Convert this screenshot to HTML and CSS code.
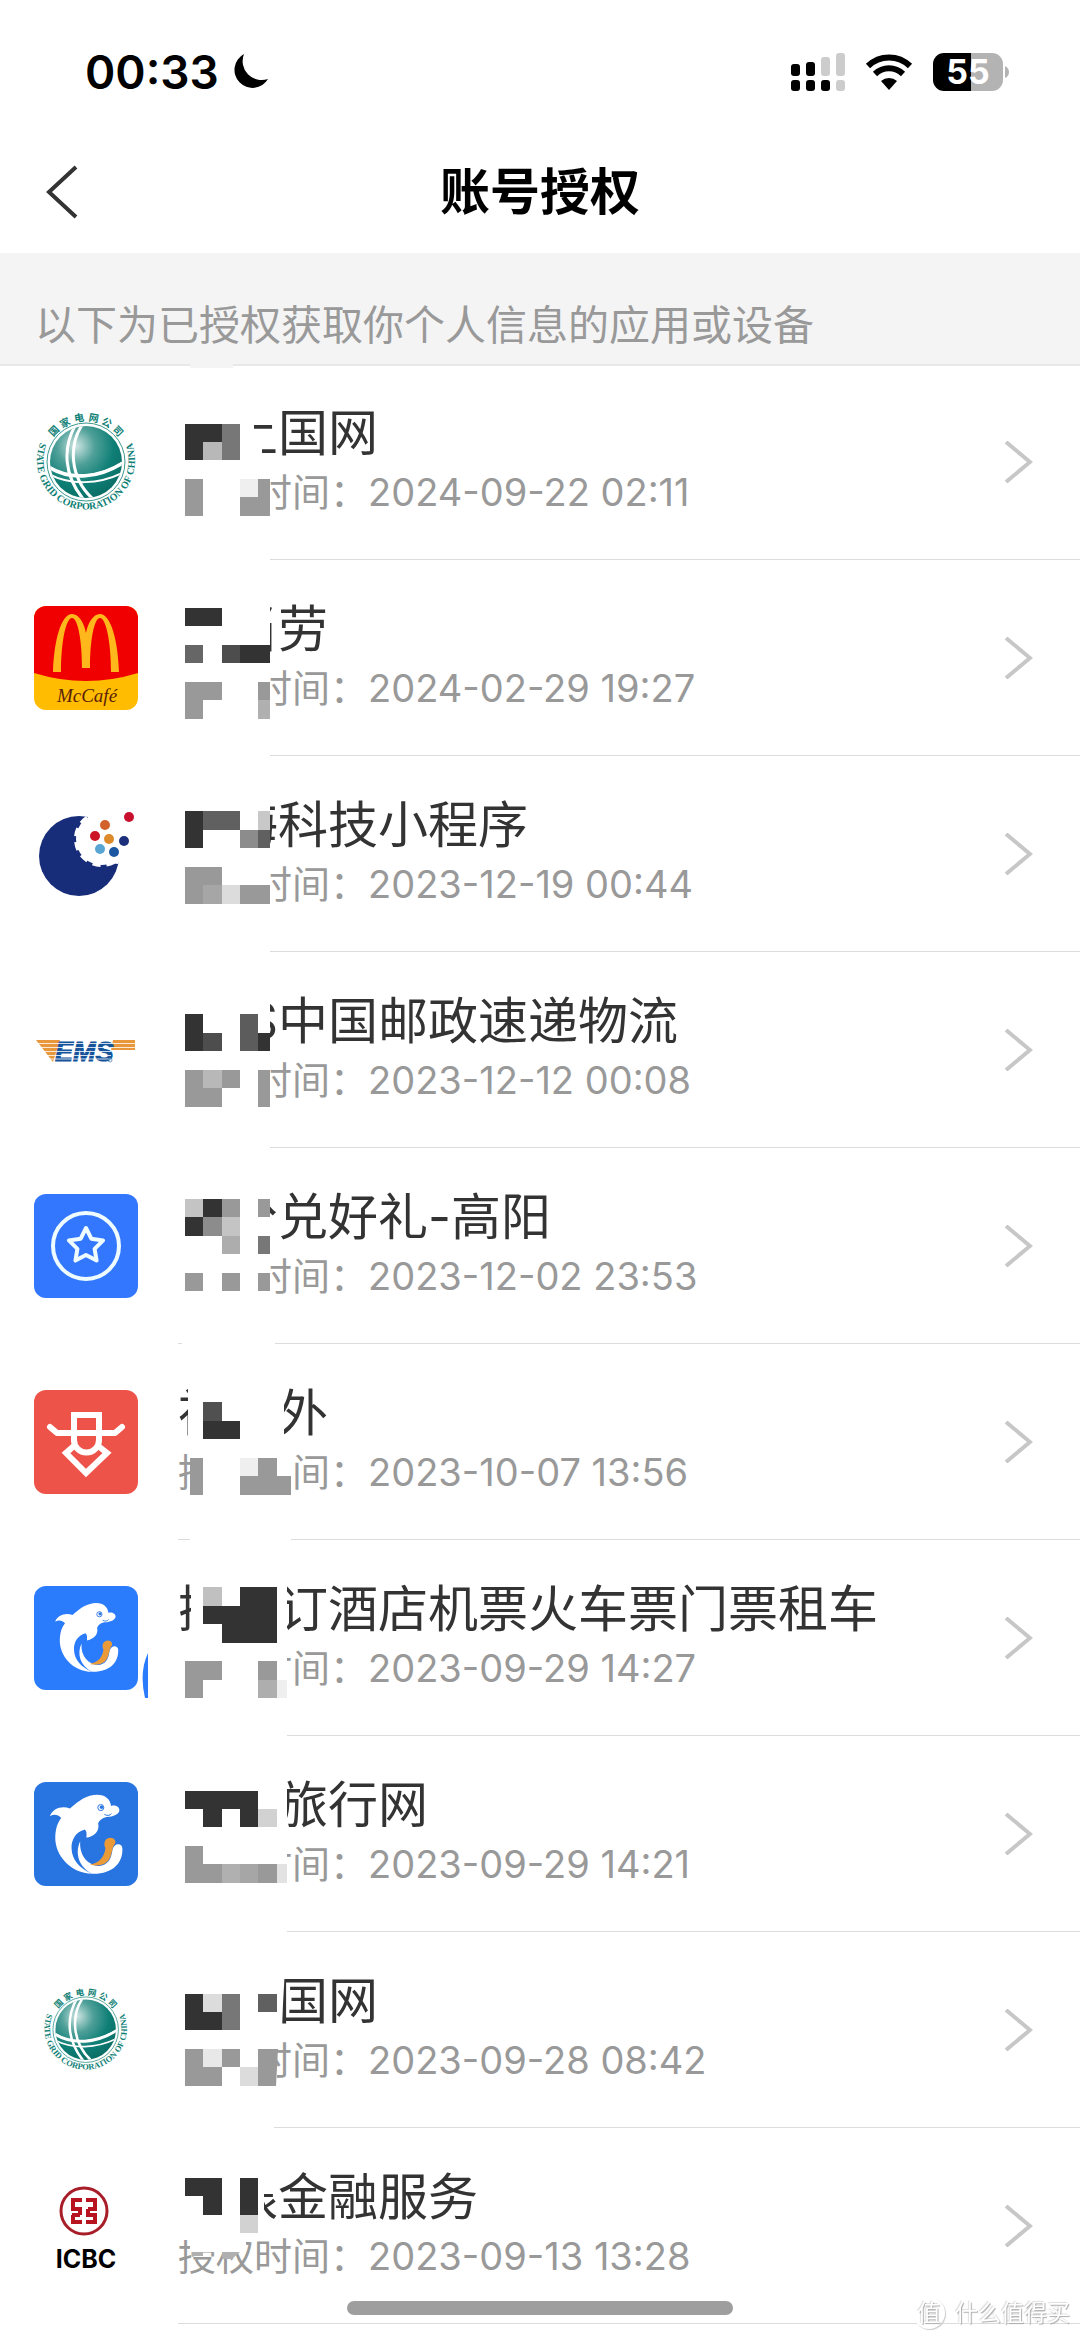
FILE: index.html
```html
<!DOCTYPE html>
<html lang="zh-CN">
<head>
<meta charset="utf-8">
<meta name="viewport" content="width=device-width, initial-scale=1">
<title>账号授权</title>
<link rel="stylesheet" href="styles.css">
</head>
<body>
<svg class="defs" aria-hidden="true">
  <defs>
    <radialGradient id="globe" cx="36%" cy="28%" r="75%">
      <stop offset="0" stop-color="#cfe6e3"/><stop offset=".35" stop-color="#4fa099"/><stop offset=".7" stop-color="#0f7f76"/><stop offset="1" stop-color="#0a6f66"/>
    </radialGradient>
    <path id="ring" d="M8 29A49 49 0 1 0 96 29"/>
    <clipPath id="ball"><circle cx="52" cy="52" r="36"/></clipPath>
    <clipPath id="tile"><rect width="104" height="104" rx="12"/></clipPath>
    <g id="grid">
      <circle cx="52" cy="52" r="39" fill="none" stroke="#3d9890" stroke-width="1"/>
      <circle cx="52" cy="52" r="36" fill="url(#globe)"/>
      <g clip-path="url(#ball)" fill="none" stroke="#fff" stroke-width="3">
        <path d="M42 14C28 38 30 66 50 90M50 12C34 34 35 68 60 90"/>
        <path d="M13 55C35 70 66 68 92 50M13 63C35 76 66 75 92 61" stroke-width="2"/>
        <path d="M14 57C36 71 66 69 92 51"/>
      </g>
      <g class="seal-cn">
        <text transform="rotate(-46 52 52)" x="52" y="11">国</text>
        <text transform="rotate(-28 52 52)" x="52" y="11">家</text>
        <text transform="rotate(-9 52 52)" x="52" y="11">电</text>
        <text transform="rotate(10 52 52)" x="52" y="11">网</text>
        <text transform="rotate(28 52 52)" x="52" y="11">公</text>
        <text transform="rotate(46 52 52)" x="52" y="11">司</text>
      </g>
      <text class="seal-en"><textPath href="#ring" startOffset="50%">STATE GRID CORPORATION OF CHINA</textPath></text>
    </g>
    <g id="dolphin">
      <path fill="#fff" d="M48 103C55 80 85 70 108 80C135 55 160 38 190 38C215 38 230 52 232 72C245 68 257 75 257 85C256 97 240 105 218 105C205 108 196 115 193 124C198 145 185 162 158 168C158 158 160 150 153 143C125 150 112 175 113 200C115 235 135 258 175 276C110 276 62 220 64 165C65 138 72 120 82 108C72 98 60 96 48 103Z"/>
      <path fill="#fff" d="M139 178C136 225 165 250 196 253C222 250 232 235 236 205C240 183 265 182 266 200C268 245 235 278 175 276C135 255 122 215 139 178Z"/>
      <path fill="#eb9a38" d="M168 249C198 243 211 225 215 200C206 180 218 168 230 168C242 168 248 178 244 186C236 192 236 210 230 225C222 245 205 256 168 249Z"/>
      <circle cx="201" cy="77" r="9" fill="#fff" stroke="#2874e0" stroke-width="3"/><circle cx="203" cy="76" r="5" fill="#2874e0"/>
      <path d="M212 98C222 103 230 100 233 95" fill="none" stroke="#2874e0" stroke-width="3"/>
    </g>
  </defs>
</svg>

<header>
  <div class="status">
    <div class="status-left">
      <span class="clock">00:33</span>
      <svg width="38" height="38" viewBox="0 0 38 38" aria-hidden="true"><path d="M13 1A18 18 0 1 0 37 26A19 19 0 0 1 13 1Z"/></svg>
    </div>
    <div class="status-right">
      <svg width="54" height="40" viewBox="0 0 54 40" aria-hidden="true">
        <g><rect y="12" width="9" height="12" rx="3"/><rect x="15" y="10" width="9" height="14" rx="3"/><rect y="28" width="9" height="11" rx="3"/><rect x="15" y="28" width="9" height="11" rx="3"/><rect x="30" y="28" width="9" height="11" rx="3"/></g>
        <g fill="#ccc"><rect x="30" y="5" width="9" height="19" rx="3"/><rect x="45" y="1" width="9" height="23" rx="3"/><rect x="45" y="28" width="9" height="11" rx="3"/></g>
      </svg>
      <svg width="48" height="36" viewBox="0 0 48 36" aria-hidden="true"><g fill="none" stroke="#000" stroke-width="6"><path d="M3 12A30 30 0 0 1 45 12"/><path d="M10 20A20 20 0 0 1 38 20"/></g><path d="M24 36L16 27A12 12 0 0 1 32 27Z"/></svg>
      <svg width="77" height="40" viewBox="0 0 77 40" aria-hidden="true">
        <path fill="#b3b3b3" d="M38 1H59A11 11 0 0 1 70 12V28A11 11 0 0 1 59 39H38ZM72 14Q76 16 76 20Q76 24 72 26Z"/>
        <path d="M38 1H11A11 11 0 0 0 0 12V28A11 11 0 0 0 11 39H38Z"/>
        <text class="charge" x="35" y="32">55</text>
      </svg>
    </div>
  </div>
  <div class="nav">
    <button class="back" type="button" aria-label="返回"><svg width="32" height="54" viewBox="0 0 32 54"><path d="M30 2L3 27L30 52" fill="none" stroke="#333" stroke-width="4"/></svg></button>
    <h1>账号授权</h1>
  </div>
</header>
<main>
<p class="notice">以下为已授权获取你个人信息的应用或设备</p>
<ul class="apps">
  <li><a class="app" href="#">
    <svg class="icon" viewBox="0 0 104 104" aria-hidden="true"><use href="#grid"/></svg>
    <span class="body"><span class="text"><span class="title in-1">上国网</span><span class="meta in-2">时间：2024-09-22 02:11</span></span>
    <svg class="arrow" viewBox="0 0 28 42" aria-hidden="true"><path d="M1 1L25 21L1 41"/></svg></span>
    <svg class="mask" viewBox="140 0 160 196" aria-hidden="true"><path fill="#fff" d="M160 3H254V70H262V105H270V196H160Z"/><path fill="#f4f4f4" d="M190 0H233V4H190Z"/>
      <path fill="#333" d="M185 60H222V78H203V96H185Z"/><path fill="#b8b8b8" d="M203 78H222V96H203Z"/><path fill="#777" d="M222 60H240V96H222Z"/>
      <path fill="#999" d="M185 115H203V152H185ZM258 115H270V152H240V133H258Z"/><path fill="#efefef" d="M240 115H258V133H240Z"/></svg>
  </a></li>
  <li><a class="app" href="#">
    <svg class="icon" viewBox="0 0 104 104" aria-hidden="true"><g clip-path="url(#tile)"><path fill="#ffbc00" d="M0 0H104V104H0Z"/><path fill="#f00000" d="M0 0H104V67Q52 83 0 67Z"/></g>
      <path fill="#ffb81c" d="M19 66C20 35 27 8 38 8C45 8 50 17 52 27C54 17 59 8 66 8C77 8 84 35 85 66H77C77 36 72 12 66 12C60 12 56 35 56 62H48C48 35 44 12 38 12C32 12 27 36 27 66Z"/><text class="mccafe" x="53" y="96">McCafé</text></svg>
    <span class="body"><span class="text"><span class="title in-1">当劳</span><span class="meta in-2">时间：2024-02-29 19:27</span></span>
    <svg class="arrow" viewBox="0 0 28 42" aria-hidden="true"><path d="M1 1L25 21L1 41"/></svg></span>
    <svg class="mask" viewBox="140 0 160 196" aria-hidden="true"><path fill="#fff" d="M160 0H270V196H160Z"/>
      <path fill="#333" d="M185 48H222V66H185ZM240 85H270V103H240Z"/><path fill="#666" d="M185 85H203V103H185Z"/><path fill="#4d4d4d" d="M222 85H240V103H222Z"/>
      <path fill="#999" d="M185 122H222V140H203V159H185ZM258 122H270V140H258Z"/><path fill="#b0b0b0" d="M258 140H270V159H258Z"/></svg>
  </a></li>
  <li><a class="app" href="#">
    <svg class="icon" viewBox="0 0 104 104" aria-hidden="true"><circle cx="45" cy="54" r="40" fill="#172d7a"/><circle cx="68" cy="37" r="26" fill="#fff" stroke="#fff" stroke-width="4" stroke-dasharray="8 6"/><path fill="#fff" d="M58 8L90 8V50L84 62L66 60Z"/>
      <g><circle cx="95" cy="15" r="5" fill="#c8102e"/><circle cx="71" cy="23" r="5" fill="#d2622a"/><circle cx="61" cy="34" r="5" fill="#cc1525"/><circle cx="75" cy="37" r="5" fill="#dd8a2a"/><circle cx="90" cy="39" r="5" fill="#1c2f7c"/><circle cx="66" cy="47" r="5" fill="#58a5d3"/><circle cx="80" cy="50" r="5" fill="#1a57a0"/></g></svg>
    <span class="body"><span class="text"><span class="title in-1">海科技小程序</span><span class="meta in-2">时间：2023-12-19 00:44</span></span>
    <svg class="arrow" viewBox="0 0 28 42" aria-hidden="true"><path d="M1 1L25 21L1 41"/></svg></span>
    <svg class="mask" viewBox="140 0 160 196" aria-hidden="true"><path fill="#fff" d="M160 0H270V196H160Z"/>
      <path fill="#333" d="M185 55H203V92H185Z"/><path fill="#606060" d="M203 55H240V74H203ZM258 74H270V92H258Z"/><path fill="#c8c8c8" d="M258 55H270V74H258Z"/><path fill="#8c8c8c" d="M240 74H258V92H240Z"/>
      <path fill="#999" d="M185 111H222V129H203V148H185ZM240 129H270V148H240Z"/><path fill="#a6a6a6" d="M203 129H222V148H203Z"/><path fill="#dcdcdc" d="M222 129H240V148H222Z"/></svg>
  </a></li>
  <li><a class="app" href="#">
    <svg class="icon" viewBox="0 0 104 104" aria-hidden="true"><path fill="#e8973a" d="M2 42H26L19 64ZM79 42H101V52H77Z"/><text class="ems" x="21" y="63">EMS</text><path stroke="#fff" stroke-width=".8" d="M0 45.500H104M0 49.500H104M0 53.500H77M0 57.500H77M0 61H77"/><circle cx="76" cy="62" r="2" fill="none" stroke="#4a78a8" stroke-width=".7"/></svg>
    <span class="body"><span class="text"><span class="title in-1"><span class="latin">S</span>中国邮政速递物流</span><span class="meta in-2">时间：2023-12-12 00:08</span></span>
    <svg class="arrow" viewBox="0 0 28 42" aria-hidden="true"><path d="M1 1L25 21L1 41"/></svg></span>
    <svg class="mask" viewBox="140 0 160 196" aria-hidden="true"><path fill="#fff" d="M160 0H270V196H160Z"/>
      <path fill="#333" d="M185 62H203V99H185ZM258 81H270V99H258Z"/><path fill="#4d4d4d" d="M203 81H222V99H203Z"/><path fill="#5c5c5c" d="M240 62H258V99H240Z"/>
      <path fill="#999" d="M185 118H240V136H222V155H185ZM258 118H270V155H258Z"/><path fill="#b8b8b8" d="M203 118H222V136H203Z"/></svg>
  </a></li>
  <li><a class="app" href="#">
    <svg class="icon" viewBox="0 0 104 104" aria-hidden="true"><rect width="104" height="104" rx="12" fill="#3377ff"/><g fill="none" stroke="#eefcff" stroke-width="4" stroke-linejoin="round"><circle cx="52" cy="52" r="33"/><path d="M52 34L57.300 44.700L69.100 46.400L60.600 54.800L62.600 66.600L52 61L41.400 66.600L43.400 54.800L34.900 46.400L46.700 44.700Z"/></g></svg>
    <span class="body"><span class="text"><span class="title in-1">分兑好礼-高阳</span><span class="meta in-2">时间：2023-12-02 23:53</span></span>
    <svg class="arrow" viewBox="0 0 28 42" aria-hidden="true"><path d="M1 1L25 21L1 41"/></svg></span>
    <svg class="mask" viewBox="140 0 160 196" aria-hidden="true"><path fill="#fff" d="M160 0H270V160H275V196H182V160H160Z"/>
      <path fill="#c4c4c4" d="M185 51H203V69H185ZM222 69H240V88H222Z"/><path fill="#333" d="M203 51H222V69H203ZM185 69H203V88H185Z"/><path fill="#999" d="M222 51H240V69H222ZM258 51H270V69H258ZM185 125H203V143H185ZM222 125H240V143H222ZM258 125H270V143H258Z"/>
      <path fill="#8c8c8c" d="M203 69H222V88H203Z"/><path fill="#adadad" d="M222 88H240V106H222Z"/><path fill="#777" d="M258 88H270V106H258Z"/></svg>
  </a></li>
  <li><a class="app" href="#">
    <svg class="icon" viewBox="0 0 104 104" aria-hidden="true"><rect width="104" height="104" rx="12" fill="#ee5349"/><g fill="none" stroke="#fff" stroke-width="6"><path d="M40 52V25H65V50A12.500 12.500 0 0 1 40 50"/><path d="M16 37L23 43H81L88 37" stroke-linecap="round" stroke-linejoin="round"/><path d="M41 55L32 63L52 83L73 63L63 55"/></g></svg>
    <span class="body"><span class="text"><span class="title">神　外</span><span class="meta">授　时间：2023-10-07 13:56</span></span>
    <svg class="arrow" viewBox="0 0 28 42" aria-hidden="true"><path d="M1 1L25 21L1 41"/></svg></span>
    <svg class="mask" viewBox="140 0 160 196" aria-hidden="true"><path fill="#fff" d="M188 20H284V100H291V196H190V100H188Z"/>
      <path fill="#505050" d="M203 58H222V77H203Z"/><path fill="#333" d="M203 77H240V95H203Z"/>
      <path fill="#999" d="M190 114H203V151H190ZM258 114H277V132H291V151H240V132H258Z"/><path fill="#efefef" d="M240 114H258V132H240Z"/></svg>
  </a></li>
  <li><a class="app" href="#">
    <svg class="icon" viewBox="0 0 313 313" aria-hidden="true"><rect width="313" height="313" rx="36" fill="#2a7cfc"/><use href="#dolphin" transform="translate(22 18) scale(.87)"/></svg>
    <span class="body"><span class="text"><span class="title">携　订酒店机票火车票门票租车</span><span class="meta in-2">时间：2023-09-29 14:27</span></span>
    <svg class="arrow" viewBox="0 0 28 42" aria-hidden="true"><path d="M1 1L25 21L1 41"/></svg></span>
    <svg class="mask" viewBox="140 0 160 196" aria-hidden="true"><path fill="#fff" d="M191 0H287V196H160V105H191Z"/><path fill="#2a7cfc" d="M148 113V158H145Q139 132 148 113Z"/>
      <path fill="#c0c0c0" d="M203 47H222V66H203Z"/><path fill="#333" d="M240 47H277V103H222V84H203V66H240Z"/>
      <path fill="#999" d="M185 121H222V140H203V158H185ZM258 121H277V140H258Z"/><path fill="#aeaeae" d="M258 140H277V158H258Z"/><path fill="#efefef" d="M277 140H287V158H277Z"/></svg>
  </a></li>
  <li><a class="app" href="#">
    <svg class="icon" viewBox="0 0 313 313" aria-hidden="true"><rect width="313" height="313" rx="36" fill="#2874e0"/><use href="#dolphin"/></svg>
    <span class="body"><span class="text"><span class="title in-2">旅行网</span><span class="meta in-2">时间：2023-09-29 14:21</span></span>
    <svg class="arrow" viewBox="0 0 28 42" aria-hidden="true"><path d="M1 1L25 21L1 41"/></svg></span>
    <svg class="mask" viewBox="140 0 160 196" aria-hidden="true"><path fill="#fff" d="M160 0H287V196H160Z"/>
      <path fill="#333" d="M185 55H258V91H240V73H222V91H203V73H185Z"/><path fill="#d2d2d2" d="M258 73H277V91H258Z"/>
      <path fill="#999" d="M185 110H203V128H222V147H185ZM258 128H277V147H258Z"/><path fill="#b0b0b0" d="M222 128H240V147H222Z"/><path fill="#a6a6a6" d="M240 128H258V147H240Z"/><path fill="#e2e2e2" d="M277 128H287V147H277Z"/></svg>
  </a></li>
  <li><a class="app" href="#">
    <svg class="icon" viewBox="0 0 104 104" aria-hidden="true"><use href="#grid" transform="translate(8 8) scale(.84)"/></svg>
    <span class="body"><span class="text"><span class="title in-2">国网</span><span class="meta in-2">时间：2023-09-28 08:42</span></span>
    <svg class="arrow" viewBox="0 0 28 42" aria-hidden="true"><path d="M1 1L25 21L1 41"/></svg></span>
    <svg class="mask" viewBox="140 0 160 196" aria-hidden="true"><path fill="#fff" d="M160 0H287L282 90V100H277V160H274V196H160Z"/>
      <path fill="#333" d="M185 62H203V80H222V98H185Z"/><path fill="#dcdcdc" d="M203 62H222V80H203ZM240 135H258V154H240Z"/><path fill="#777" d="M222 62H240V98H222Z"/><path fill="#606060" d="M258 62H277V80H258Z"/>
      <path fill="#999" d="M185 117H240V135H222V154H185ZM258 117H278L276 154H258Z"/><path fill="#e8e8e8" d="M203 117H222V135H203Z"/></svg>
  </a></li>
  <li><a class="app" href="#">
    <svg class="icon" viewBox="0 0 104 104" aria-hidden="true"><circle cx="50" cy="37" r="23" fill="none" stroke="#a81e28" stroke-width="3"/><path fill="none" stroke="#b81420" stroke-width="4" d="M48 26H39V35H46V41M38 41H46M39 41V48H48M52 26H61V35H54M54 35V41H61V48H52"/><text class="icbc" x="52" y="94">ICBC</text></svg>
    <span class="body"><span class="text"><span class="title in-1">银金融服务</span><span class="meta">授权时间：2023-09-13 13:28</span></span>
    <svg class="arrow" viewBox="0 0 28 42" aria-hidden="true"><path d="M1 1L25 21L1 41"/></svg></span>
    <svg class="mask" viewBox="140 0 160 196" aria-hidden="true"><path fill="#fff" d="M160 0H274V66H264V105H246V124H190V112H160Z"/>
      <path fill="#333" d="M185 50H222V87H203V68H185ZM240 50H258V87H240Z"/><path fill="#d2d2d2" d="M240 87H258V105H240Z"/><path fill="#b0b0b0" d="M222 124H240L232 131H222ZM192 124H203V128H192Z"/></svg>
  </a></li>
</ul>
</main>
<div class="home-bar"></div>
<div class="watermark"><span class="badge">值</span><span>什么值得买</span></div>
</body>
</html>
```

FILE: styles.css
```css
* { box-sizing: border-box; }
body {
  margin: 0;
  min-height: 100vh;
  background: #fff;
  color: #333;
  font-family: Inter, "Noto Sans CJK SC", sans-serif;
}
.defs { position: absolute; width: 0; height: 0; }

.status {
  display: flex;
  justify-content: space-between;
  align-items: center;
  height: 130px;
  padding: 14px 70px 0 85px;
}
.status-left { display: flex; align-items: center; gap: 12px; }
.status-right { display: flex; align-items: center; gap: 20px; }
.clock { color: #000; font-size: 46px; font-weight: 600; line-height: 60px; }
.charge { fill: #fff; font: 700 34px Inter, sans-serif; text-anchor: middle; }

.nav {
  display: grid;
  grid-template-columns: 1fr auto 1fr;
  align-items: center;
  height: 123px;
  padding: 0 46px;
}
.back { justify-self: start; display: flex; padding: 0; border: 0; background: none; }
h1 { margin: 0; color: #000; font-size: 50px; font-weight: 600; line-height: 60px; }

.notice {
  margin: 0;
  padding: 48px 35px 15px;
  background: #f4f4f4;
  color: #999;
  font-size: 41px;
  line-height: 48px;
}

.apps {
  margin: 0;
  padding: 0;
  list-style: none;
  box-shadow: inset 0 2px #e8e8e8;
}
.app {
  position: relative;
  display: flex;
  align-items: center;
  gap: 40px;
  height: 196px;
  padding-left: 34px;
  color: inherit;
  text-decoration: none;
}
.icon { flex: none; width: 104px; height: 104px; }
.body {
  flex: 1;
  display: flex;
  align-items: center;
  justify-content: space-between;
  align-self: stretch;
  padding-right: 47px;
  border-bottom: 1px solid #dcdcdc;
}
.text { display: flex; flex-direction: column; }
.title { font-size: 50px; line-height: 60px; }
.meta { color: #999; font-size: 38px; line-height: 58px; }
.in-1 { padding-left: 1em; }
.in-2 { padding-left: 2em; }
.latin { display: inline-block; width: 1em; text-align: right; }
.arrow { width: 28px; height: 42px; fill: none; stroke: #c7c7c7; stroke-width: 4px; }
.mask { position: absolute; left: 140px; top: 0; width: 160px; height: 196px; }

.seal-cn { fill: #0f7f76; font: 700 10px "Noto Sans CJK SC", sans-serif; text-anchor: middle; }
.seal-en { fill: #0f7f76; font: 700 10px "Liberation Serif", serif; text-anchor: middle; }
.mccafe { fill: #5a1f0a; font: italic 400 19px "Liberation Serif", serif; text-anchor: middle; }
.ems { fill: #14539a; stroke: #14539a; stroke-width: 1px; font: italic 700 27px "Liberation Sans", sans-serif; }
.icbc { fill: #000; font: 700 25px Inter, sans-serif; text-anchor: middle; }

.home-bar {
  position: fixed;
  left: 50%;
  bottom: 22px;
  width: 386px;
  height: 14px;
  margin-left: -193px;
  border-radius: 7px;
  background: #9e9e9e;
}
.watermark {
  position: fixed;
  right: 10px;
  bottom: 8px;
  display: flex;
  align-items: center;
  gap: 10px;
  color: #fff;
  font-size: 23px;
  line-height: 32px;
  text-shadow: 1px 1px 1px #aaa, -1px -1px 1px #ddd;
}
.badge {
  width: 32px;
  height: 32px;
  border-radius: 50%;
  background: #fff;
  box-shadow: 1px 1px 1px #ccc;
  text-align: center;
}
```
